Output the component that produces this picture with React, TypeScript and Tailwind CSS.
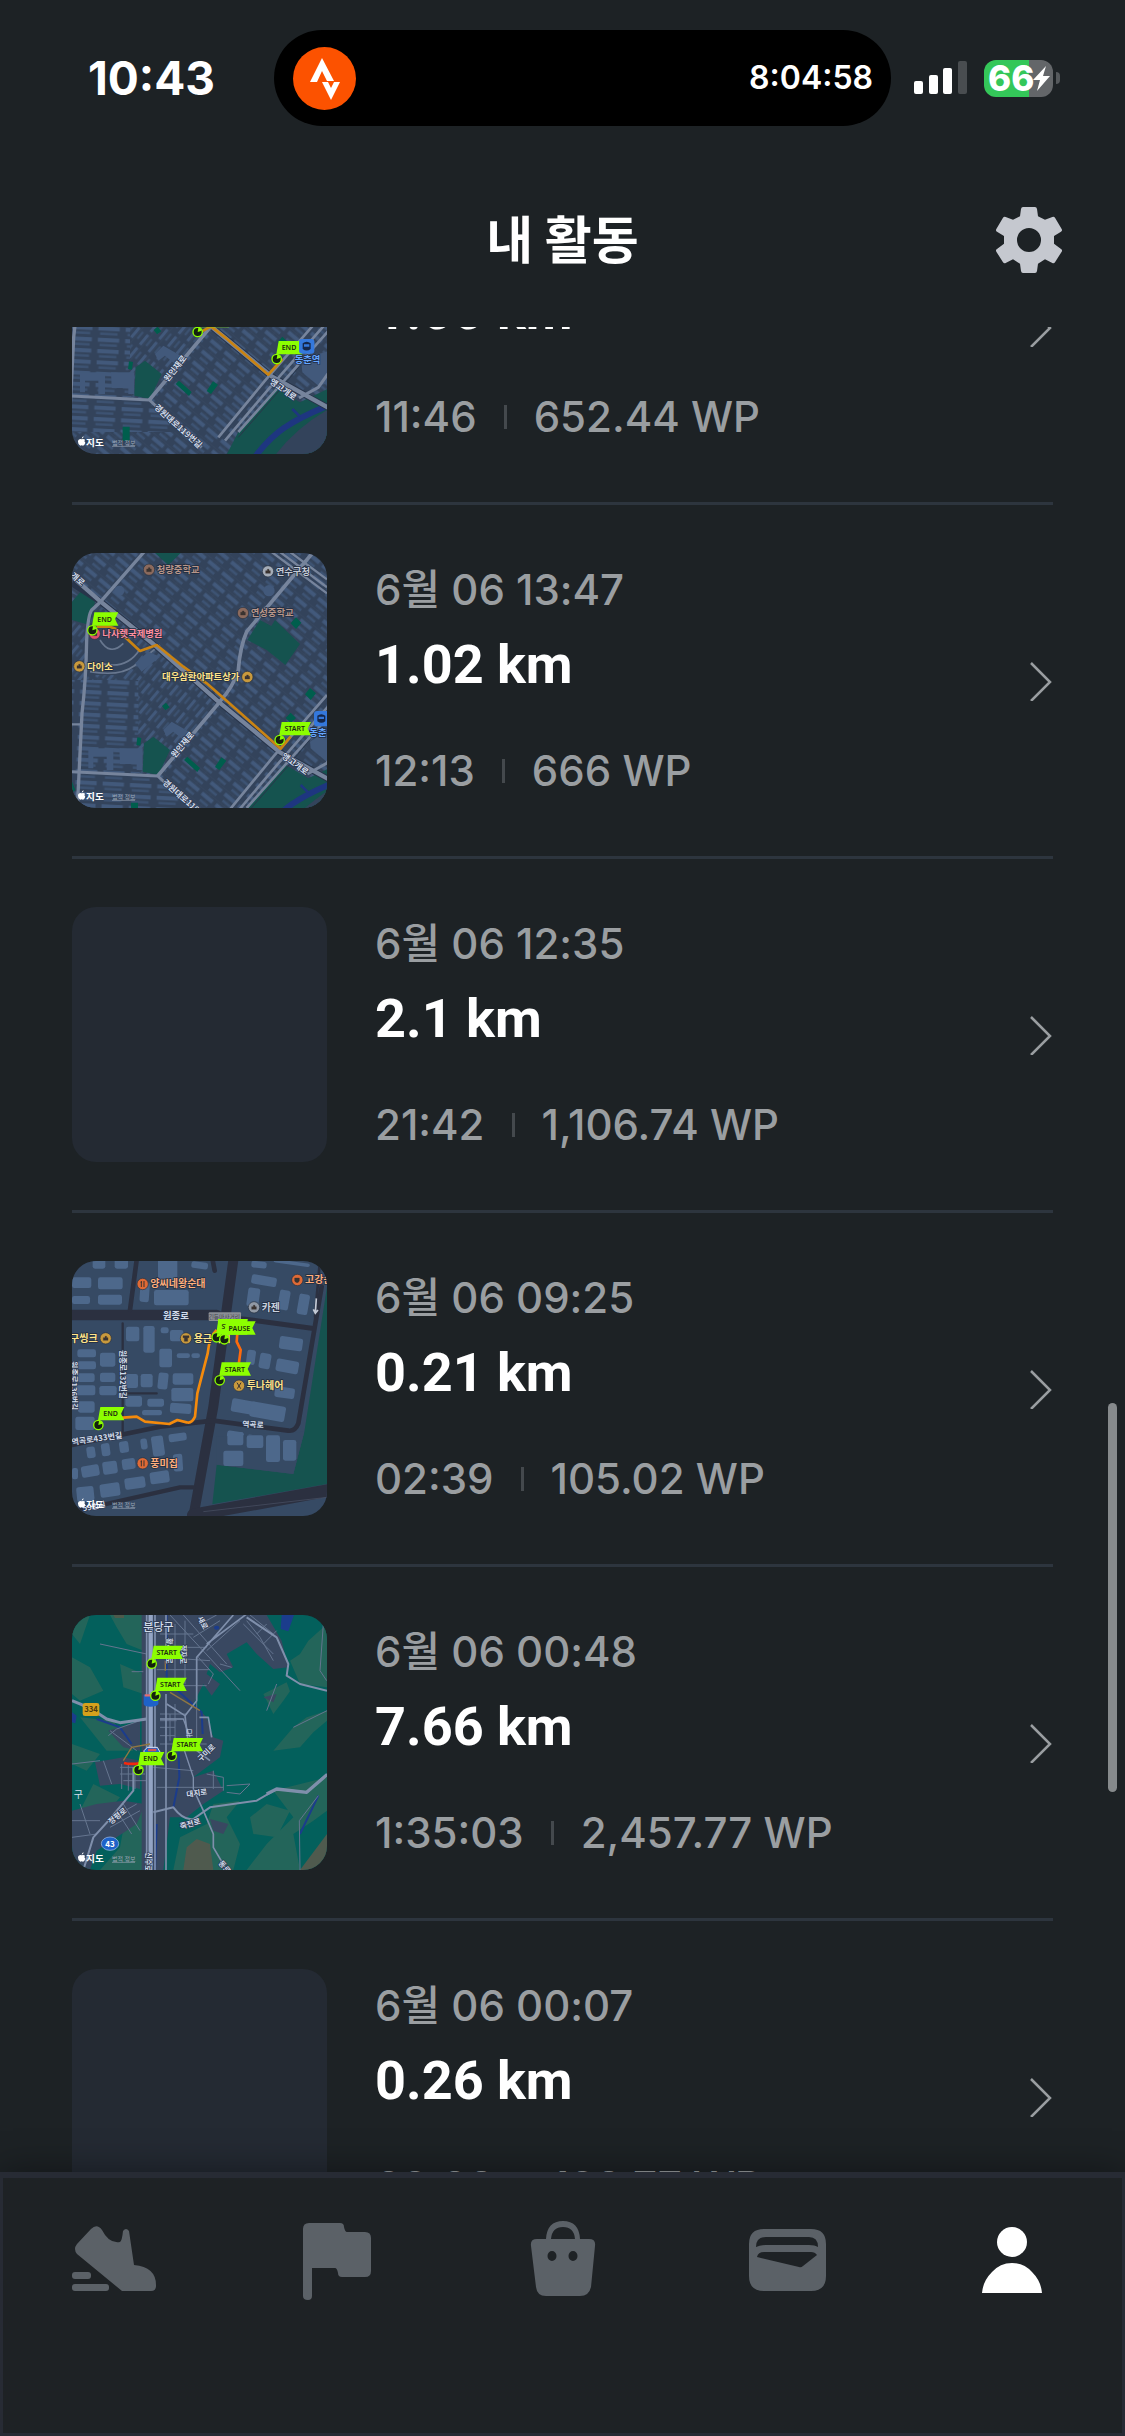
import type { ReactNode } from "react";

interface MarkerProps {
    x: number;
    y: number;
    label: string;
}

// green flag on a pole, used for START / END / PAUSE points
function Marker({ x, y, label }: MarkerProps) {
    const width = label.length > 3 ? 88 : 72;
    const left = x + 6;
    return (
        <g>
            <circle cx={x} cy={y} r="14" fill="#14210f" stroke="#8cff00" strokeWidth="4" />
            <path d={`M${x} ${y}L${x + 2} ${y - 13}Q${x + 12} ${y - 12} ${x + 12} ${y - 4}Z`} fill="#8cff00" />
            <path
                d={`M${left} ${y - 54}H${left + width}L${left + width - 10} ${y - 34}L${left + width} ${y - 14}H${x - 1}Z`}
                fill="#8cff00"
            />
            <text x={left + (width - 10) / 2} y={y - 26} textAnchor="middle" fontSize="21" fontWeight="600" fill="#1c2b10" fontFamily="Noto Sans">
                {label}
            </text>
        </g>
    );
}

interface PlaceProps {
    x: number;
    y: number;
    label: string;
    color: string;
    pin: string;
    size?: number;
    before?: boolean;
    glyph?: ReactNode;
}

function Place({ x, y, label, color, pin, size = 28, before, glyph }: PlaceProps) {
    return (
        <g>
            <circle cx={x} cy={y} r="17" fill={pin} stroke="#27303f" strokeWidth="2" />
            <g transform={`translate(${x} ${y})`} fill="#3a3330" stroke="#3a3330">{glyph ?? <path d="M-7 6V-2H-2V-6H3V-2H7V6Z" />}</g>
            <text
                x={before ? x - 24 : x + 23}
                y={y + 10}
                textAnchor={before ? "end" : "start"}
                fontSize={size}
                fontWeight="700"
                fill={color}
                stroke="#222c3e"
                strokeWidth="4"
                paintOrder="stroke"
            >
                {label}
            </text>
        </g>
    );
}

interface RoadNameProps {
    x: number;
    y: number;
    angle?: number;
    size?: number;
    children: string;
}

function RoadName({ x, y, angle = 0, size = 25, children }: RoadNameProps) {
    return (
        <text
            transform={`translate(${x} ${y}) rotate(${angle})`}
            fontSize={size}
            fontWeight="700"
            fill="#d3dceb"
            stroke="#2b384e"
            strokeWidth="4"
            paintOrder="stroke"
        >
            {children}
        </text>
    );
}

function MapCredit({ y }: { y: number }) {
    return (
        <g>
            <path
                d={`M65 ${y - 17}q1-6 6-7q0 6-6 7M56 ${y - 14}q5-3 9-1q6-2 10 1q-4 5 1 9q-3 9-7 9q-4-2-8 0q-7-3-7-12q0-4 2-6`}
                fill="#fff"
            />
            <text x="78" y={y + 4} fontSize="29" fontWeight="700" fill="#fff">지도</text>
            <text x="156" y={y + 3} fontSize="18" fill="#9aa5b5">법적 정보</text>
            <path d={`M156 ${y + 6}h69`} stroke="#9aa5b5" strokeWidth="2" />
        </g>
    );
}

interface MapFrameProps {
    id: string;
    viewBox: string;
    label: string;
    children: ReactNode;
}

function MapFrame({ id, viewBox, label, children }: MapFrameProps) {
    return (
        <svg viewBox={viewBox} role="img" aria-label={label} className="block size-full font-['Noto_Sans_CJK_KR',sans-serif]">
            <defs>
                <pattern id={`${id}-down`} width="54" height="42" patternUnits="userSpaceOnUse" patternTransform="rotate(40)">
                    <rect width="54" height="42" fill="#33435b" />
                    <path d="M0 1H54M27 0V42" stroke="#3c4c64" strokeWidth="1" />
                    <rect x="4" y="8" width="42" height="12" fill="#42597b" />
                    <rect x="12" y="29" width="30" height="8" fill="#3d5373" />
                </pattern>
                <pattern id={`${id}-up`} width="50" height="34" patternUnits="userSpaceOnUse" patternTransform="rotate(-50)">
                    <rect width="50" height="34" fill="#33435b" />
                    <path d="M0 16H50" stroke="#3c4c64" strokeWidth="1" />
                    <rect x="5" y="3" width="38" height="9" fill="#42597b" />
                    <rect x="14" y="21" width="26" height="6" fill="#3d5373" />
                </pattern>
                <pattern id={`${id}-flat`} width="82" height="34" patternUnits="userSpaceOnUse" patternTransform="rotate(3)">
                    <rect width="82" height="34" fill="#33435b" />
                    <rect x="2" y="3" width="64" height="12" fill="#42597b" />
                    <rect x="8" y="21" width="52" height="7" fill="#3d5373" />
                </pattern>
            </defs>
            {children}
        </svg>
    );
}

// the district shared by the two walks around Dongchun station
function DongchunBase({ id }: { id: string }) {
    return (
        <g>
            <rect x="-60" y="-60" width="980" height="980" fill={`url(#${id}-down)`} />
            <path d="M36 160L110 190L478 487L295 705L36 695Z" fill={`url(#${id}-up)`} />
            <path d="M78 420H235V600L225 640L240 700H36V420Z" fill={`url(#${id}-flat)`} />
            <path d="M36 700L295 710L390 804H36Z" fill={`url(#${id}-flat)`} />
            <path d="M118 250L200 290L250 330L220 385L170 405H80V250Z" fill="#33435b" />
            <path d="M120 300Q150 350 190 310M122 370Q200 390 238 330M90 395Q180 410 222 378L300 315" fill="none" stroke="#68778f" strokeWidth="5" />
            <path d="M225 370L265 335L300 350L245 395Z" fill="#42597b" />
            <path d="M85 625H160V690H140V650H100V685H85ZM178 625H248V690H230V672H180Z" fill="#42597b" />
            <path d="M310 570L335 545L395 580L370 600L340 575L320 590Z" fill="#42597b" />
            <circle cx="627" cy="152" r="17" fill="#42597b" />
            <circle cx="178" cy="152" r="15" fill="#42597b" />
            <path d="M66 150L106 180L88 255L36 240V185Z" fill="#15534f" />
            <path d="M285 39H362L325 76Z" fill="#15534f" />
            <path d="M600 240L634 258L645 240L720 312L676 375L620 330L562 300Z" fill="#15534f" />
            <path d="M280 590L330 630L295 705L248 695L252 610Z" fill="#15534f" />
            <g fill="#005e4d">
                <path d="M708 232L724 248L708 267L692 250ZM750 444L768 460L752 480L735 463ZM692 518L708 534L692 550L677 534Z" />
                <path d="M318 488L329 502L316 511L306 498ZM232 592L244 594L241 617L229 615ZM382 650L420 684L412 696L372 660ZM484 652L499 662L478 690L465 681Z" />
                <path d="M213 788H234V830H213ZM36 725L46 750L36 760Z" />
            </g>
            <path d="M560 804L672 672L745 715L900 640V920H500Z" fill="#15534f" />
            <path d="M640 920Q720 780 900 700V920Z" fill="#33435b" />
            <path d="M580 920Q640 830 700 790Q750 755 860 712" fill="none" stroke="#1e3680" strokeWidth="18" />
            <path d="M722 735L745 758" stroke="#1e3680" strokeWidth="8" />
            <path d="M750 605L801 570L900 540V640L800 665L752 625Z" fill="#42597b" />
            <path d="M560 820L700 660L801 535" fill="none" stroke="#29374a" strokeWidth="3" />
            <g fill="none" stroke="#27344a" strokeWidth="19">
                <path d="M36 130L122 185L280 312L478 487L660 637L900 770" />
            </g>
            <g fill="none" stroke="#76849c" strokeLinejoin="round">
                <path d="M36 110L122 185L280 312L478 487L660 637L900 770" strokeWidth="13" />
                <path d="M252 36L122 185L95 210Q84 225 80 300Q78 420 66 520L52 804" strokeWidth="10" />
                <path d="M760 36L560 275Q540 320 535 390Q520 440 478 487L293 708" strokeWidth="11" />
                <path d="M36 695L293 708L450 850" strokeWidth="9" />
                <path d="M36 553H64" strokeWidth="7" />
                <path d="M801 465L640 650L500 820M830 470L655 670L520 830M840 490L560 804" strokeWidth="8" />
                <path d="M635 36L801 160M660 36L801 142M690 36L801 118" strokeWidth="7" />
                <path d="M742 702L800 670L850 600" strokeWidth="9" />
            </g>
        </g>
    );
}

function DongchunFull() {
    return (
        <MapFrame id="full" viewBox="36 39 765 765" label="동춘역 경로 지도">
            <DongchunBase id="full" />
            <path d="M110 260L150 260L170 268L240 333L290 315L370 380L440 430L520 500L662 626L692 590" fill="none" stroke="#c98312" strokeWidth="8" strokeLinejoin="round" />
            <RoadName x={30} y={108} angle={42}>개로</RoadName>
            <RoadName x={345} y={655} angle={-50}>원인재로</RoadName>
            <RoadName x={663} y={652} angle={36}>앵고개로</RoadName>
            <RoadName x={306} y={730} angle={41}>경원대로119번길</RoadName>
            <Place x={267} y={89} label="청량중학교" color="#b8968a" pin="#8b6a5d" />
            <Place x={624} y={94} label="연수구청" color="#c3cad6" pin="#a5adb8" />
            <Place x={549} y={219} label="연성중학교" color="#b8968a" pin="#8b6a5d" />
            <Place x={104} y={281} label="나사렛국제병원" color="#ff8fa0" pin="#dc4f6c" />
            <Place x={58} y={379} label="다이소" color="#ffe48a" pin="#c99a3d" />
            <Place x={562} y={411} label="대우삼환아파트상가" color="#ffe48a" pin="#c99a3d" before />
            <rect x="762" y="513" width="46" height="46" rx="9" fill="#3478dc" />
            <path d="M772 527q12-9 24 0v17q-12 9-24 0ZM776 530h16v7h-16Z" fill="#14264a" fillRule="evenodd" />
            <text x="748" y="587" fontSize="28" fontWeight="700" fill="#65a7ff" stroke="#1d2b45" strokeWidth="4" paintOrder="stroke">동춘역</text>
            <Marker x={97} y={271} label="END" />
            <Marker x={659} y={600} label="START" />
            <MapCredit y={775} />
        </MapFrame>
    );
}

function DongchunCropped() {
    return (
        <MapFrame id="cropped" viewBox="61 105 765 765" label="동춘역 경로 지도">
            <DongchunBase id="cropped" />
            <path d="M440 508L478 487L520 520L650 632L692 585" fill="none" stroke="#c98312" strokeWidth="8" strokeLinejoin="round" />
            <RoadName x={349} y={655} angle={-52}>원인재로</RoadName>
            <RoadName x={652} y={656} angle={36}>앵고개로</RoadName>
            <RoadName x={306} y={732} angle={42}>경원대로119번길</RoadName>
            <text x="729" y="598" fontSize="28" fontWeight="700" fill="#65a7ff" stroke="#1d2b45" strokeWidth="4" paintOrder="stroke">동춘역</text>
            <Marker x={438} y={504} label="START" />
            <Marker x={675} y={585} label="END" />
            <rect x="742" y="525" width="46" height="44" rx="9" fill="#3478dc" />
            <path d="M753 538q12-9 24 0v17q-12 9-24 0ZM757 541h16v7h-16Z" fill="#14264a" fillRule="evenodd" />
            <g transform="translate(25 66)">
                <MapCredit y={775} />
            </g>
        </MapFrame>
    );
}

// x, y, width, height, angle
const blocks = [
    [98, 20, 38, 36, 0], [164, 20, 40, 36, 0], [294, 20, 58, 78, 0], [394, 36, 50, 20, 8],
    [36, 82, 58, 32, 0], [114, 82, 74, 36, 0], [36, 138, 54, 24, 0], [114, 134, 72, 30, 0],
    [240, 96, 28, 60, 4], [282, 120, 104, 46, 0], [574, 34, 46, 20, 6], [574, 78, 76, 28, 10],
    [562, 114, 36, 56, 8], [656, 120, 32, 60, 10], [714, 132, 32, 62, 10], [640, 34, 110, 10, 8],
    [198, 230, 40, 44, 0], [250, 228, 34, 80, 0], [120, 308, 46, 42, 0], [52, 298, 56, 24, 0],
    [52, 334, 56, 24, 0], [52, 370, 52, 26, 0], [120, 368, 46, 28, 0], [48, 406, 58, 30, 0],
    [118, 408, 52, 28, 0], [298, 296, 38, 56, 0], [350, 310, 40, 14, 0], [394, 310, 26, 14, 0],
    [196, 372, 38, 42, 0], [242, 372, 36, 40, 0], [294, 368, 30, 50, 6], [338, 370, 62, 34, 0],
    [54, 454, 50, 34, 0], [196, 438, 50, 32, 0], [262, 446, 50, 24, 0], [334, 414, 66, 40, 0],
    [330, 460, 64, 30, 4], [46, 500, 58, 40, 0], [246, 480, 60, 16, 0], [302, 232, 24, 18, 0], [330, 240, 40, 34, 0],
    [658, 262, 70, 38, 8], [598, 310, 34, 46, 10], [648, 330, 68, 38, 10], [560, 300, 26, 44, 8],
    [644, 412, 60, 32, 8], [514, 450, 76, 40, 10], [570, 462, 106, 46, 10], [500, 544, 50, 40, 8],
    [560, 556, 50, 38, 8], [618, 556, 40, 80, 6], [670, 568, 40, 64, 8], [490, 604, 60, 44, 8],
    [80, 590, 26, 34, -8], [124, 580, 26, 38, -8], [178, 574, 28, 34, -8], [242, 566, 20, 32, -8],
    [276, 558, 36, 60, -8], [326, 550, 54, 24, -8], [64, 646, 54, 34, -10], [128, 634, 44, 38, -8],
    [186, 626, 40, 32, -8], [340, 612, 28, 52, -4], [36, 654, 18, 34, 0], [50, 710, 52, 44, -6], [120, 700, 60, 40, -8],
    [194, 682, 62, 34, -8], [270, 664, 58, 36, -8],
];

function WonjongMap() {
    return (
        <MapFrame id="wonjong" viewBox="36 33 765 765" label="원종로 경로 지도">
            <rect width="840" height="840" fill="#364a64" />
            {blocks.map(([x, y, width, height, angle]) => (
                <rect
                    key={`${x}-${y}`}
                    x={x}
                    y={y}
                    width={width}
                    height={height}
                    rx="7"
                    fill="#4d688b"
                    transform={`rotate(${angle} ${x + width / 2} ${y + height / 2})`}
                />
            ))}
            <path d="M801 110L733 545L700 672L470 644L457 763L801 702Z" fill="#15534f" />
            <path d="M470 560L733 545L700 672L470 644Z" fill="#364a64" />
            <g fill="#4d688b">
                <rect x="502" y="546" width="48" height="40" rx="7" />
                <rect x="560" y="556" width="50" height="38" rx="7" />
                <rect x="618" y="556" width="42" height="80" rx="7" />
                <rect x="669" y="570" width="40" height="62" rx="7" />
                <rect x="490" y="602" width="60" height="46" rx="7" />
            </g>
            <g fill="none" stroke="#2b3040" strokeLinejoin="round" strokeLinecap="round">
                <path d="M30 197H460L590 212L755 235" strokeWidth="15" />
                <path d="M30 195H470" strokeWidth="32" />
                <path d="M520 30L460 470L400 800" strokeWidth="30" />
                <path d="M230 30L210 180" strokeWidth="14" />
                <path d="M458 30L464 62" strokeWidth="14" />
                <path d="M785 110L715 520Q705 545 685 542L460 512L300 530L36 585" strokeWidth="14" />
                <path d="M780 30L765 200" strokeWidth="8" />
                <path d="M188 220V545M190 430H290" strokeWidth="7" />
                <path d="M400 712H360L36 785" strokeWidth="13" />
                <path d="M400 795L801 722" strokeWidth="38" />
            </g>
            <path d="M430 785L801 742" stroke="#4b5366" strokeWidth="2" />
            <path d="M470 240Q448 260 443 310L412 430L405 500Q395 522 380 517L352 510L328 522L255 515L230 500L190 503L130 500" fill="none" stroke="#f48a0c" strokeWidth="8" strokeLinejoin="round" />
            <path d="M532 250L530 275L542 300L536 345" fill="none" stroke="#ff6a0c" strokeWidth="8" />
            <path d="M769 145L766 188M760 178L766 190L774 180" fill="none" stroke="#c3cad6" strokeWidth="5" />
            <RoadName x={309} y={206} size={28}>원종로</RoadName>
            <RoadName x={547} y={530} angle={3} size={23}>역곡로</RoadName>
            <RoadName x={181} y={300} angle={90} size={23}>원종로132번길</RoadName>
            <RoadName x={34} y={334} angle={90} size={23}>원종로136번길</RoadName>
            <RoadName x={36} y={585} angle={-8} size={24}>역곡로433번길</RoadName>
            <RoadName x={70} y={784} angle={-12} size={23}>59번길</RoadName>
            <rect x="446" y="187" width="97" height="26" rx="3" fill="#8b8e95" />
            <text x="446" y="207" fontSize="17" fill="#41454f">긴등마사거리</text>
            <Place x={248} y={102} label="양씨네왕순대" color="#ffae7c" pin="#df6a36" size={30} glyph={<path d="M-4-9V9M4-9V9M-6-5H-2" strokeWidth="3" />} />
            <Place x={712} y={90} label="고강순대" color="#ffae7c" pin="#df6a36" size={30} glyph={<path d="M-8-6H6V2Q4 8-1 8Q-7 7-8 2Z" />} />
            <Place x={582} y={172} label="카젠" color="#c9d2df" pin="#9199a5" size={30} />
            <Place x={137} y={265} label="구씽크" color="#ffe48a" pin="#c99a3d" size={30} before />
            <Place x={378} y={265} label="용근이네" color="#ffe48a" pin="#c99a3d" size={30} glyph={<path d="M-9-8H9V-2H5V9H-5V-2H-9Z" />} />
            <Place x={537} y={407} label="투나헤어" color="#ffe48a" pin="#c99a3d" size={30} glyph={<path d="M-6-9L5 9M6-9L-5 9" strokeWidth="3" />} />
            <Place x={248} y={640} label="풍미집" color="#ffae7c" pin="#df6a36" size={30} glyph={<path d="M-4-9V9M4-9V9M-6-5H-2" strokeWidth="3" />} />
            <path d="M474 207H562V254H472Z" fill="#8cff00" />
            <Marker x={470} y={262} label="START" />
            <Marker x={493} y={268} label="PAUSE" />
            <Marker x={479} y={391} label="START" />
            <Marker x={115} y={525} label="END" />
            <MapCredit y={769} />
        </MapFrame>
    );
}

function BundangMap() {
    return (
        <MapFrame id="bundang" viewBox="36 33 765 765" label="분당구 경로 지도">
            <rect width="840" height="840" fill="#03605c" />
            <g fill="#23655a">
                <path d="M36 33H90L60 120L36 90ZM150 33H250V140L200 120L170 70ZM36 160L90 190L130 260L60 290L36 270ZM180 180L250 210V270L190 250Z" />
                <path d="M36 420L120 450L80 500L36 480ZM100 540L180 580L130 640L60 620ZM200 620L250 600V798H120L180 730Z" />
                <path d="M690 170L720 150L745 110L801 60V250L720 240ZM610 270L680 235L690 262L670 290L640 330ZM700 370L740 340L801 320V350L760 385L720 430L640 440Z" />
                <path d="M570 640L620 600L690 620L650 700L580 690ZM640 560L801 520V620L760 650L700 690L720 798H560L620 720L700 640Z" />
                <path d="M460 600L540 590L500 640L540 720L520 798H340L360 700L440 660Z" />
                <path d="M300 480L400 540L340 610L300 600Z" />
                <path d="M60 340L160 350L220 440L140 440Z" />
            </g>
            <path d="M160 33H192V42H165Z" fill="#4d5a4b" />
            <path d="M370 798L380 730L410 705L450 720L460 798ZM720 798L801 690V798Z" fill="#4f5a4e" />
            <g fill="#394861">
                <path d="M255 33H620L665 110L685 190L640 195L590 150L560 115L500 150L520 190L480 205L450 180L440 210L480 240L455 275L430 240L400 300L440 340L460 400L490 410L480 460L440 490L400 520L460 500L490 560L430 600L380 640L330 640L310 798H260Z" />
                <path d="M105 475L190 460L240 470V555L180 540L120 545ZM36 620L110 600L190 590L255 600L230 660L170 700L110 740L90 798H36ZM145 380L240 350V440L190 430Z" />
                <path d="M450 645L505 660L490 690L460 680ZM610 280L650 270L640 295ZM245 33H260V798H245Z" />
            </g>
            <g fill="#1b3c8c">
                <path d="M665 33H702L685 82L662 75ZM36 325L50 335L46 358L36 355Z" />
                <ellipse cx="470" cy="71" rx="8" ry="6" />
            </g>
            <path d="M320 33V230L425 325L428 390M110 345L180 370L215 420M355 420L358 520L340 610M290 660L285 798M775 575L720 690" fill="none" stroke="#1b3c8c" strokeWidth="6" />
            <g fill="none" stroke="#65758f" strokeWidth="3">
                <path d="M300 90H400M300 130H440M290 197H450M300 245H440M300 160L450 170M345 60V240M375 50V240M410 160V420" />
                <path d="M300 330H380M300 350H350M300 370H345M300 395H345M345 300V420M330 330V410M300 420H440M280 490L400 500M290 550H490" />
                <path d="M330 33L540 260M370 33L500 180M420 60L470 33M400 100L480 50M440 140L540 50M550 60L640 150M570 33L640 90M590 90L620 60M610 120L650 80" />
                <path d="M180 490H250M180 510H255M190 530H260M185 480V555M205 480V560M225 490V555M160 640L230 600M150 670L240 620M190 600L240 680M170 620L215 690" />
                <path d="M36 650H120M60 600L90 690M36 700L110 690M120 120L260 150M215 203H250M130 470L155 540M440 510L490 520V560M460 500V555" />
                <path d="M500 545L570 540L540 570L500 565M720 798L718 650L775 575M650 240L620 320M700 370L801 320M790 60L780 200L800 230M36 480L120 470" />
                <path d="M415 160L460 210L445 240M480 180L515 190M560 50L600 100L640 170M150 380L230 440M145 395L170 375L240 350" />
            </g>
            <g fill="none" stroke="#7f8fab" strokeLinejoin="round">
                <path d="M318 33V160M318 270V798" strokeWidth="5" />
                <path d="M320 300L375 335L410 290V160L520 33M440 120L560 30M375 335L385 420L450 470M418 340H445L455 400" strokeWidth="5" />
                <path d="M560 40L650 100L685 180L680 215L720 240L801 260" strokeWidth="6" />
                <path d="M70 798L100 700L150 645L220 560V490" strokeWidth="6" />
                <path d="M280 625L340 610Q370 650 400 645L450 610L590 590L650 555L740 565L801 510" strokeWidth="6" />
                <path d="M620 570L650 555L740 565L801 512" strokeWidth="10" />
                <path d="M400 555L430 620L460 690V730L500 798" strokeWidth="5" />
                <path d="M36 290Q90 310 140 345L180 356L260 345" strokeWidth="9" />
                <path d="M300 345H370L390 400M370 430L400 520V560" strokeWidth="4" />
            </g>
            <path d="M260 33V798M285 33V798" stroke="#8090ae" strokeWidth="5" />
            <path d="M272 33V798" stroke="#93a4c4" strokeWidth="13" />
            <path d="M190 470L215 430L270 420M330 265L420 320M316 170V200" fill="none" stroke="#8f7742" strokeWidth="4" />
            <path d="M192 477Q210 482 238 478" fill="none" stroke="#f5280c" strokeWidth="8" />
            <text x="250" y="82" fontSize="33" fontWeight="500" fill="#d3dceb" stroke="#2b384e" strokeWidth="4" paintOrder="stroke">분당구</text>
            <text x="41" y="583" fontSize="30" fill="#d3dceb">구</text>
            <text x="377" y="396" fontSize="24" fill="#d3dceb">므</text>
            <RoadName x={412} y={42} angle={62} size={22}>새로</RoadName>
            <RoadName x={322} y={102} angle={90} size={21}>황새울로</RoadName>
            <RoadName x={364} y={122} angle={90} size={21}>정자로</RoadName>
            <RoadName x={422} y={474} angle={-44} size={23}>구미로</RoadName>
            <RoadName x={380} y={580} angle={-8} size={23}>대지로</RoadName>
            <RoadName x={362} y={676} angle={-16} size={23}>죽전로</RoadName>
            <RoadName x={152} y={662} angle={-38} size={23}>정평로</RoadName>
            <RoadName x={258} y={745} angle={90} size={21}>신수로</RoadName>
            <RoadName x={474} y={778} angle={50} size={23}>동로</RoadName>
            <rect x="68" y="297" width="50" height="39" rx="7" fill="#d5a11c" />
            <text x="93" y="325" textAnchor="middle" fontSize="23" fontWeight="700" fill="#4a3a12">334</text>
            <path d="M251 272H295V300Q290 308 272 308Q252 308 251 300Z" fill="#1e62c8" />
            <path d="M254 274H272" stroke="#e26d6d" strokeWidth="7" />
            <path d="M252 440L262 430H292L300 444V460H252Z" fill="#1e62c8" stroke="#dfe6f2" strokeWidth="3" />
            <path d="M264 438H289" stroke="#d35454" strokeWidth="7" />
            <ellipse cx="150" cy="719" rx="26" ry="20" fill="#1e62c8" stroke="#a9c4ee" strokeWidth="2" />
            <text x="150" y="728" textAnchor="middle" fontSize="24" fontWeight="700" fill="#fff">43</text>
            <Marker x={275} y={179} label="START" />
            <Marker x={286} y={275} label="START" />
            <Marker x={335} y={456} label="START" />
            <Marker x={235} y={498} label="END" />
            <MapCredit y={769} />
        </MapFrame>
    );
}

interface Activity {
    date: string;
    distance: string;
    duration: string;
    points: string;
    map?: ReactNode;
}

const activities: Activity[] = [
    { date: "6월 06 15:12", distance: "1.00 km", duration: "11:46", points: "652.44 WP", map: <DongchunCropped /> },
    { date: "6월 06 13:47", distance: "1.02 km", duration: "12:13", points: "666 WP", map: <DongchunFull /> },
    { date: "6월 06 12:35", distance: "2.1 km", duration: "21:42", points: "1,106.74 WP" },
    { date: "6월 06 09:25", distance: "0.21 km", duration: "02:39", points: "105.02 WP", map: <WonjongMap /> },
    { date: "6월 06 00:48", distance: "7.66 km", duration: "1:35:03", points: "2,457.77 WP", map: <BundangMap /> },
    { date: "6월 06 00:07", distance: "0.26 km", duration: "03:08", points: "138.77 WP" },
];

function ActivityRow({ date, distance, duration, points, map }: Activity) {
    return (
        <li className="border-b-[3px] border-[#2d353e]">
            <a href="#activity" className="flex items-center gap-12 py-12">
                <div className="size-[255px] shrink-0 overflow-hidden rounded-3xl bg-[#242a33]">{map}</div>
                <div className="flex flex-1 flex-col self-stretch pt-3 font-medium text-[#9a9ea1]">
                    <p className="text-[42px] leading-[50px]">{date}</p>
                    <p className="mt-[18px] font-['Roboto',sans-serif] text-[54px] leading-[64px] font-bold text-white">{distance}</p>
                    <div className="mt-[49px] flex items-center gap-[27px] text-[42px] leading-[50px]">
                        <span>{duration}</span>
                        <span className="h-6 w-[3px] bg-[#44494d]" />
                        <span>{points}</span>
                    </div>
                </div>
                <svg viewBox="0 0 24 40" className="h-10 w-6 shrink-0" fill="none" stroke="#9a9ea1" strokeWidth="2.5">
                    <path d="M2 2L21 21L2 40" />
                </svg>
            </a>
        </li>
    );
}

function StatusBar() {
    return (
        <div className="flex items-center pt-[30px] font-semibold text-white">
            <span className="w-[274px] pl-[88px] text-[46px] leading-[48px] font-bold">10:43</span>
            <div className="flex h-24 flex-1 items-center justify-between rounded-full bg-black pr-[18px] pl-[19px]">
                <svg viewBox="0 0 63 63" className="size-[63px]">
                    <circle cx="31.5" cy="31.5" r="31.5" fill="#fc5200" />
                    <path d="M17 35L29 11L41 34H34L29 24L24 35Z" fill="#fff" />
                    <path d="M29 35H35L38 41L41 35H47L38 53Z" fill="#fff" />
                </svg>
                <span className="text-[32px] leading-10">8:04:58</span>
            </div>
            <div className="flex w-[234px] items-center pl-[23px]">
                <svg viewBox="0 0 53 34" className="h-[34px] w-[53px]" fill="#fff">
                    <rect x="0" y="20" width="9" height="13" rx="2" />
                    <rect x="15" y="14" width="9" height="19" rx="2" />
                    <rect x="29" y="7" width="9" height="26" rx="2" />
                    <rect x="44" y="0" width="9" height="33" rx="2" fill="#494d50" />
                </svg>
                <div className="ml-[17px] flex h-[37px] w-[69px] items-center rounded-xl bg-linear-to-r from-[#34c759] from-65% to-[#636669] to-65% pl-1">
                    <span className="w-[45px] text-[35px] leading-[37px] font-extrabold">66</span>
                    <svg viewBox="0 0 17 25" className="h-[25px] w-[17px]" fill="#fff">
                        <path d="M13 0L0 14H7L4 25L17 10H10Z" />
                    </svg>
                </div>
                <span className="ml-[3px] h-3 w-1 rounded-r-full bg-[#55595c]" />
            </div>
        </div>
    );
}

function Header() {
    return (
        <header className="grid grid-cols-[1fr_auto_1fr] items-center px-[63px] pt-[72px] pb-[45px]">
            <h1 className="col-start-2 pb-1.5 font-['Noto_Sans_CJK_KR',sans-serif] text-[51px] leading-[78px] font-bold text-white">내 활동</h1>
            <button aria-label="설정" className="justify-self-end">
                <svg viewBox="288 501 198 198" className="size-[66px]" fill="#c5c8cf">
                    <path
                        fillRule="evenodd"
                        d="M369 501H405Q410 501 411 507L414 529L435 539L457 531Q462 529 465 533L485 567Q488 572 483 575L462 588V611L483 627Q488 630 485 635L465 667Q462 671 457 669L435 658L414 671L411 693Q410 699 405 699H369Q364 699 363 693L360 671L339 658L317 669Q312 671 309 667L289 635Q286 630 291 627L312 611V588L291 575Q286 572 289 567L309 533Q312 529 317 531L339 539L360 529L363 507Q364 501 369 501ZM387 564a36 36 0 1 0 0 72a36 36 0 1 0 0-72Z"
                    />
                </svg>
            </button>
        </header>
    );
}

interface Tab {
    name: string;
    active?: boolean;
    icon: ReactNode;
}

const tabs: Tab[] = [
    {
        name: "걷기",
        icon: (
            <>
                <path d="M22 14Q28 8 33 15Q40 29 51 27Q53 26 54 16Q57 12 60 16L65 50Q87 52 87 70V71Q87 76 82 76H53L8 39Q4 34 8 29Z" />
                <rect x="3" y="57" width="19" height="7" rx="3" />
                <rect x="3" y="69" width="37" height="7" rx="3" />
            </>
        ),
    },
    {
        name: "챌린지",
        icon: <path d="M10 14Q10 8 16 8H47Q51 8 51 12Q52 17 54 17H72Q78 17 78 23V56Q78 62 72 62H49Q45 62 45 58Q44 53 42 53H19V81Q19 85 15 85Q10 85 10 81Z" />,
    },
    {
        name: "상점",
        icon: (
            <path
                fillRule="evenodd"
                d="M28 24Q29 6 45 6Q61 6 62 24H71Q78 24 77 31L73 72Q71 81 62 81H28Q19 81 18 72L13 31Q12 24 19 24ZM33 24H57Q56 12 45 12Q34 12 33 24ZM34 36a4.5 5 0 1 0 0 10a4.5 5 0 1 0 0-10ZM55 36a4.5 5 0 1 0 0 10a4.5 5 0 1 0 0-10Z"
            />
        ),
    },
    {
        name: "지갑",
        icon: (
            <path
                fillRule="evenodd"
                d="M22 14H69Q84 14 84 29V61Q84 76 69 76H22Q7 76 7 61V29Q7 14 22 14ZM24 22Q14 22 14 32Q18 30 24 30H67Q73 30 76 32Q76 22 67 22ZM22 37Q16 37 15 42L57 52Q59 53 61 51L75 40Q73 37 69 37Z"
            />
        ),
    },
    {
        name: "내 활동",
        active: true,
        icon: (
            <>
                <circle cx="46" cy="27" r="15" />
                <path d="M16 78Q17 66 26 57Q34 48 46 48Q58 48 66 57Q75 66 76 78Z" />
            </>
        ),
    },
];

function BottomNav() {
    return (
        <nav className="relative flex h-[264px] shrink-0 items-start justify-between border-3 border-t-6 border-[#272b34] bg-[#1e2225] px-[66px] pt-[37px] shadow-[0_0_36px_rgba(0,0,0,0.4)]">
            {tabs.map(({ name, active, icon }) => (
                <a key={name} href="#tab" aria-label={name} className={active ? "text-white" : "text-[#5b6167]"}>
                    <svg viewBox="0 0 90 90" className="size-[90px]" fill="currentColor">
                        {icon}
                    </svg>
                </a>
            ))}
        </nav>
    );
}

export default function App() {
    return (
        <div className="flex h-screen flex-col bg-[#1d2225] font-['Inter','Noto_Sans_CJK_KR',sans-serif]">
            <StatusBar />
            <Header />
            <main className="relative min-h-0 flex-1 overflow-hidden px-[72px]">
                {/* list is scrolled part way through the first row */}
                <ul className="-mt-44">
                    {activities.map((activity) => (
                        <ActivityRow key={activity.date} {...activity} />
                    ))}
                </ul>
                <div className="absolute top-[1076px] right-2 h-[389px] w-[9px] rounded-full bg-[#868a8c]" />
            </main>
            <BottomNav />
        </div>
    );
}
